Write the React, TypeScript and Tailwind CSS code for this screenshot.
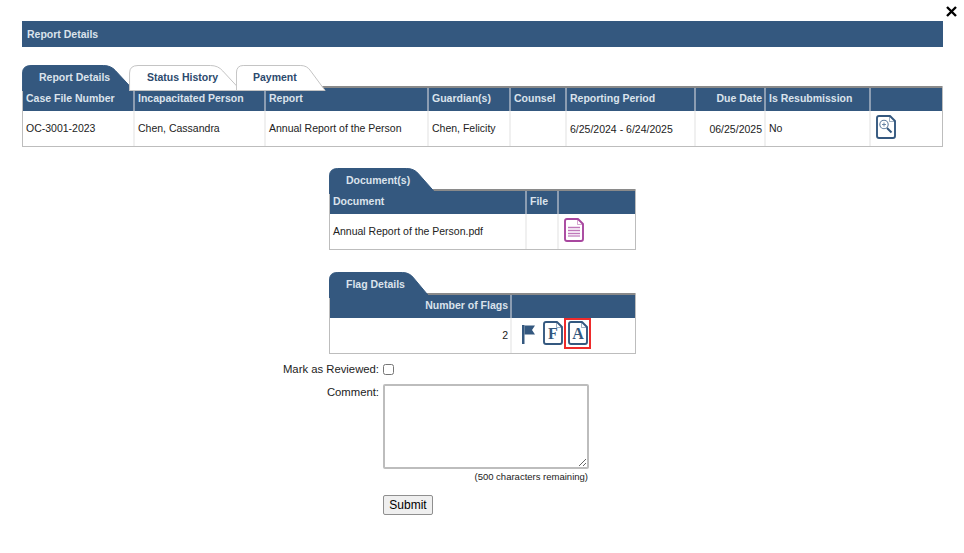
import React from 'react';

const navy = '#34587f';

// tab outline: rounded top left, long slope down to the right
const Tab = ({ label, active, className }: { label: string; active?: boolean; className: string }) => (
  <div className={`relative h-[26px] shrink-0 ${className}`}>
    <svg className="absolute inset-0 h-full w-full" viewBox="0 0 100 26" preserveAspectRatio="none">
      <path
        d="M0.5 26V8Q0.5 0.5 8 0.5H72Q79 0.5 83 6L99 25.5H0.5"
        fill={active ? navy : '#fff'}
        stroke={active ? navy : '#c4c4c4'}
        vectorEffect="non-scaling-stroke"
      />
    </svg>
    <span className={`relative block pt-[6px] text-[10.5px] font-bold leading-[13px] ${active ? 'text-[#dbe3ec]' : 'text-[#2c4a6e]'}`}>
      {label}
    </span>
  </div>
);

const DocIcon = ({ color = navy, children, className }: { color?: string; children?: React.ReactNode; className?: string }) => (
  <svg className={className} width="20" height="24" viewBox="0 0 20 24" fill="none">
    <path
      d="M3 1H14L19 6V21Q19 23 17 23H3Q1 23 1 21V3Q1 1 3 1Z"
      stroke={color}
      strokeWidth="1.9"
      strokeLinejoin="round"
      fill="#fff"
    />
    <path d="M13.5 1.5V6.5H18.5" stroke={color} strokeWidth="0.8" opacity="0.6" />
    {children}
  </svg>
);

const Th = ({ children, right }: { children?: React.ReactNode; right?: boolean }) => (
  <div className={`truncate border-r-2 border-[#8c9db2] pl-[3px] pr-[2px] pt-[4px] text-[10.5px] font-bold leading-[13px] text-[#dbe3ec] last:border-r-0 ${right ? 'text-right' : ''}`}>
    {children}
  </div>
);

const Td = ({ children, right, className = '' }: { children?: React.ReactNode; right?: boolean; className?: string }) => (
  <div className={`flex items-center border-r-2 border-[#f0f0f0] pl-[3px] pr-[2px] text-[10.5px] text-[#222] last:border-r-0 ${right ? 'justify-end' : ''} ${className}`}>
    {children}
  </div>
);

const mainCols = 'grid-cols-[112px_131px_163px_82px_56px_129px_70px_105px_1fr]';

export default function App() {
  return (
    <div className="relative h-[553px] w-[964px] overflow-hidden bg-white pt-[21px] font-['Liberation_Sans',Arial,sans-serif]">
      <svg className="absolute left-[946px] top-[6px]" width="11" height="11" viewBox="0 0 11 11">
        <path d="M1 1L10 10M10 1L1 10" stroke="#000" strokeWidth="2.4" />
      </svg>

      <div className="mx-[22px] w-[921px]">
        <div className="h-[26px] bg-[#34587f] pl-[5px] pt-[7px] text-[10.5px] font-bold leading-[13px] text-[#dbe3ec]">
          Report Details
        </div>

        {/* tabs sit over the top edge of the table */}
        <div className="relative z-10 mt-[18px] flex h-[26px]">
          <Tab label="Report Details" active className="w-[113px] pl-[17px]" />
          <Tab label="Status History" className="-ml-[6px] w-[113px] pl-[18px]" />
          <Tab label="Payment" className="-ml-[6px] w-[90px] pl-[17px]" />
        </div>

        <div className="-mt-[5px] border border-t-0 border-[#bdbdbd]">
          <div className={`grid h-[25px] ${mainCols} border-t-2 border-[#8a8a8a] bg-[#34587f]`}>
            <Th>Case File Number</Th>
            <Th>Incapacitated Person</Th>
            <Th>Report</Th>
            <Th>Guardian(s)</Th>
            <Th>Counsel</Th>
            <Th>Reporting Period</Th>
            <Th right>Due Date</Th>
            <Th>Is Resubmission</Th>
            <Th />
          </div>
          <div className={`grid h-[35px] ${mainCols}`}>
            <Td>OC-3001-2023</Td>
            <Td>Chen, Cassandra</Td>
            <Td>Annual Report of the Person</Td>
            <Td>Chen, Felicity</Td>
            <Td />
            <Td className="pt-[2px]">6/25/2024 - 6/24/2025</Td>
            <Td right className="pt-[2px]">06/25/2025</Td>
            <Td>No</Td>
            <Td className="pb-[4px] pl-[5px]">
              <DocIcon>
                <circle cx="8" cy="9.5" r="4.2" stroke="#5f7d9f" strokeWidth="1.1" />
                <path d="M6 9.5H10M8 7.5V11.5" stroke="#5f7d9f" strokeWidth="0.9" />
                <path d="M11 13L15.5 17.5" stroke={navy} strokeWidth="2" />
              </DocIcon>
            </Td>
          </div>
        </div>
      </div>

      <div className="ml-[329px] mt-[21px] w-[307px]">
        <Tab label="Document(s)" active className="relative z-10 w-[108px] pl-[17px]" />
        <div className="-mt-[5px] border border-t-0 border-[#bdbdbd]">
          <div className="grid h-[25px] grid-cols-[197px_32px_1fr] border-t-2 border-[#8a8a8a] bg-[#34587f]">
            <Th>Document</Th>
            <Th>File</Th>
            <Th />
          </div>
          <div className="grid h-[35px] grid-cols-[197px_32px_1fr]">
            <Td>Annual Report of the Person.pdf</Td>
            <Td />
            <Td className="pb-[3px] pl-[5px]">
              <DocIcon color="#a8479f">
                <rect x="4" y="8" width="12" height="11" fill="#f0dff0" />
                <path d="M4 9.5H16M4 12.5H16M4 15.5H16M4 18H16" stroke="#c078ba" strokeWidth="1" />
              </DocIcon>
            </Td>
          </div>
        </div>
      </div>

      <div className="ml-[329px] mt-[22px] w-[307px]">
        <Tab label="Flag Details" active className="relative z-10 w-[102px] pl-[17px]" />
        <div className="-mt-[5px] border border-t-0 border-[#bdbdbd]">
          <div className="grid h-[25px] grid-cols-[182px_1fr] border-t-2 border-[#8a8a8a] bg-[#34587f]">
            <Th right>Number of Flags</Th>
            <Th />
          </div>
          <div className="grid h-[35px] grid-cols-[182px_1fr]">
            <Td right>2</Td>
            <Td className="pl-[9px]">
              <div className="flex h-full items-start">
                <svg className="mt-[6px]" width="15" height="20" viewBox="0 0 15 20" fill={navy}>
                  <path d="M1 1H3.5V20H1Z" />
                  <path d="M3.5 1.5H14L11 6L14 10.5H3.5Z" />
                </svg>
                <DocIcon className="ml-[7px] mt-[3px]">
                  <text x="10" y="17.5" textAnchor="middle" fontFamily="'Liberation Serif',serif" fontWeight="700" fontSize="16" fill={navy}>F</text>
                </DocIcon>
                <span className="ml-[1px] flex h-[31px] w-[27px] justify-center border-2 border-[#ee2b2b] pt-[1px]">
                  <DocIcon>
                    <text x="10" y="17.5" textAnchor="middle" fontFamily="'Liberation Serif',serif" fontWeight="700" fontSize="16" fill={navy}>A</text>
                  </DocIcon>
                </span>
              </div>
            </Td>
          </div>
        </div>
      </div>

      <div className="mt-[8px] flex h-[15px] items-center text-[11.3px] text-[#222]">
        <span className="w-[379px] text-right">Mark as Reviewed:</span>
        <input type="checkbox" className="m-0 ml-[4px] h-[11px] w-[11px]" />
      </div>

      <div className="mt-[7px] flex items-start text-[11.3px] text-[#222]">
        <span className="w-[379px] pt-[1px] text-right leading-[14px]">Comment:</span>
        <div className="ml-[4px] w-[206px]">
          <textarea className="block h-[85px] w-[206px] rounded-[2px] border-2 border-[#bdbdbd] bg-white" />
          <div className="mt-[2px] pr-[1px] text-right text-[9.5px] leading-[12px]">(500 characters remaining)</div>
          <button className="mt-[12px] block h-[20px] w-[50px] rounded-[2px] border border-[#8f8f8f] bg-[#efefef] text-[12px] leading-none text-black">
            Submit
          </button>
        </div>
      </div>
    </div>
  );
}
